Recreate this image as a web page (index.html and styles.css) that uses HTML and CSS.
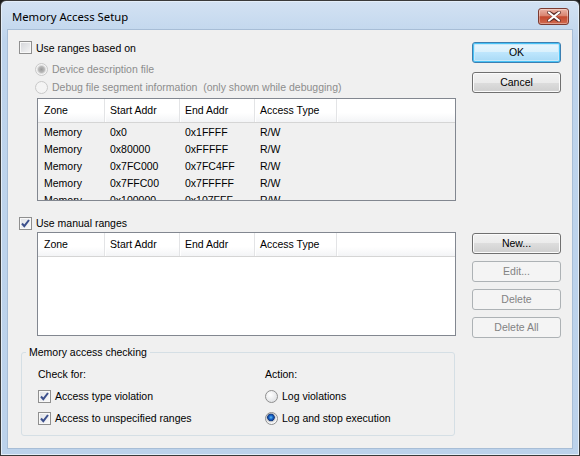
FILE: index.html
```
<!DOCTYPE html>
<html>
<head>
<title>Memory Access Setup</title>
<link rel="stylesheet" href="styles.css">
</head>
<body>
<div class="window">
  <div class="titlebar">
    <span class="title">Memory Access Setup</span>
    <span class="close"><svg width="16" height="11" viewBox="0 0 16 11"><path d="M3 1.5 L8 4.5 L13 1.5 M3 9.5 L8 6.5 L13 9.5" fill="none" stroke="#5a2a25" stroke-width="3.6" stroke-linecap="round"/><path d="M3 1.5 L13 9.5 M13 1.5 L3 9.5" fill="none" stroke="#fff" stroke-width="2.2" stroke-linecap="round"/></svg></span>
  </div>
  <div class="client">
    <div class="main">
      <div class="row"><span class="check"></span><span class="label">Use ranges based on</span></div>
      <div class="options">
        <div class="row off"><span class="radio on"></span><span class="label">Device description file</span></div>
        <div class="row off"><span class="radio"></span><span class="label">Debug file segment information&nbsp; (only shown while debugging)</span></div>
      </div>
      <div class="list grayed">
        <div class="head">
          <span>Zone</span><span>Start Addr</span><span>End Addr</span><span>Access Type</span><span></span>
        </div>
        <div class="body">
          <div class="item"><span>Memory</span><span>0x0</span><span>0x1FFFF</span><span>R/W</span></div>
          <div class="item"><span>Memory</span><span>0x80000</span><span>0xFFFFF</span><span>R/W</span></div>
          <div class="item"><span>Memory</span><span>0x7FC000</span><span>0x7FC4FF</span><span>R/W</span></div>
          <div class="item"><span>Memory</span><span>0x7FFC00</span><span>0x7FFFFF</span><span>R/W</span></div>
          <div class="item"><span>Memory</span><span>0x100000</span><span>0x107FFF</span><span>R/W</span></div>
        </div>
      </div>
      <div class="row manual"><span class="check ticked"><svg width="11" height="11" viewBox="0 0 11 11"><path d="M2 5.5 L4.3 8.2 L9 2" fill="none" stroke="#3b4f8c" stroke-width="2"/></svg></span><span class="label">Use manual ranges</span></div>
      <div class="list">
        <div class="head">
          <span>Zone</span><span>Start Addr</span><span>End Addr</span><span>Access Type</span><span></span>
        </div>
        <div class="body"></div>
      </div>
      <fieldset class="group">
        <legend>Memory access checking</legend>
        <div class="cols">
          <div class="col">
            <div class="row">Check for:</div>
            <div class="row"><span class="check ticked"><svg width="11" height="11" viewBox="0 0 11 11"><path d="M2 5.5 L4.3 8.2 L9 2" fill="none" stroke="#3b4f8c" stroke-width="2"/></svg></span><span class="label">Access type violation</span></div>
            <div class="row"><span class="check ticked"><svg width="11" height="11" viewBox="0 0 11 11"><path d="M2 5.5 L4.3 8.2 L9 2" fill="none" stroke="#3b4f8c" stroke-width="2"/></svg></span><span class="label">Access to unspecified ranges</span></div>
          </div>
          <div class="col">
            <div class="row">Action:</div>
            <div class="row"><span class="radio"></span><span class="label">Log violations</span></div>
            <div class="row"><span class="radio on"></span><span class="label">Log and stop execution</span></div>
          </div>
        </div>
      </fieldset>
    </div>
    <div class="side">
      <div class="btn default">OK</div>
      <div class="btn">Cancel</div>
      <div class="btn new">New...</div>
      <div class="btn disabled">Edit...</div>
      <div class="btn disabled">Delete</div>
      <div class="btn disabled">Delete All</div>
    </div>
  </div>
</div>
</body>
</html>
```
FILE: styles.css
```
/* Memory Access Setup dialog, Windows 7 basic look */

body
{ margin: 0;
background-color: #1c1c1c;
font-family: "Liberation Sans", Arial, sans-serif;
font-size: 10.5px;
color: #000;
}

div.window
{ width: 580px;
height: 456px;
box-sizing: border-box;
border: 1px solid #3a3a3a;
border-radius: 6px 6px 0 0;
background: linear-gradient(#d3e2f3, #bed4ec 40px, #bcd2eb);
box-shadow: inset 0 0 0 1px #e4eef9;
}

div.titlebar
{ height: 29px;
display: flex;
align-items: center;
padding-left: 11px;
padding-right: 10px;
}

span.title
{ flex: 1;
font-family: "Noto Sans", sans-serif;
font-size: 11.3px;
margin-top: 1px;
}

span.close
{ width: 29px;
height: 15px;
border: 1px solid #7b3a31;
border-radius: 3px;
display: flex;
align-items: center;
justify-content: center;
background: linear-gradient(#eab3a6, #d98470 45%, #c4492f 52%, #d06a50);
box-shadow: inset 0 0 0 1px rgba(255,255,255,0.35);
margin-top: 1px;
}

div.client
{ margin: 0 7px;
height: 418px;
background-color: #f0f0f0;
display: flex;
box-shadow: 0 0 0 1px #a7bdd6;
}

div.main
{ width: 437px;
padding: 9px 0 0 11px;
}

div.row
{ height: 18px;
display: flex;
align-items: center;
white-space: nowrap;
}

div.main > div.row:first-child
{ height: 17px;
}

span.label
{ margin-left: 4px;
}

span.check
{ width: 11px;
height: 11px;
border: 1px solid #8f8f8f;
background: linear-gradient(135deg, #d3d5d9, #f6f6f6);
box-shadow: inset 0 0 0 1px #f8f8f8;
display: flex;
}

span.check.ticked
{ background: linear-gradient(135deg, #dfe1e6, #fafafa);
}

span.radio
{ width: 11px;
height: 11px;
border: 1px solid #8f8f8f;
border-radius: 50%;
background: radial-gradient(circle at 40% 35%, #ffffff, #d7d9dc);
}

span.radio.on
{ background: radial-gradient(circle at 45% 40%, #5fc1f2 0, #1560c9 2px, #173a7a 3.5px, #b5b9c0 4px, #e8e9eb 5px, #fafafa 6px);
}

div.off
{ color: #8d8d8d;
}

div.off span.radio
{ border-color: #c9c9c9;
background: #f4f4f4;
}

div.off span.radio.on
{ background: radial-gradient(circle, #9a9a9a 0, #b9b9b9 3px, #dcdcdc 4px, #f4f4f4 5px);
}

div.options
{ margin-left: 16px;
margin-top: 4px;
}

div.list
{ margin-left: 18px;
width: 419px;
box-sizing: border-box;
border: 1px solid #828790;
background-color: #fff;
overflow: hidden;
}

div.list.grayed
{ margin-top: 2px;
height: 103px;
background-color: #f0f0f0;
}

div.head
{ display: grid;
grid-template-columns: 67px 75px 75px 82px 1fr;
height: 23px;
border-bottom: 1px solid #d5d5d5;
background: linear-gradient(#ffffff 60%, #f3f4f6);
}

div.head span
{ border-right: 1px solid #e3e4e6;
box-shadow: 1px 0 0 #fff;
padding-left: 5px;
line-height: 23px;
}

div.head span:first-child,
div.item span:first-child
{ padding-left: 6px;
}

div.head span:last-child
{ border-right: none;
}

div.body
{ padding-top: 1px;
}

div.item
{ display: grid;
grid-template-columns: 67px 75px 75px 82px;
height: 17px;
line-height: 17px;
}

div.item span
{ padding-left: 5px;
}

div.row.manual
{ margin-top: 13px;
}

div.list:not(.grayed)
{ height: 104px;
}

fieldset.group
{ margin: 9px 0 0 2px;
width: 434px;
box-sizing: border-box;
padding: 0 0 8px 0;
border: 1px solid #d5dfe5;
border-radius: 3px;
}

fieldset.group legend
{ margin-left: 4px;
padding: 0 3px;
line-height: 14px;
}

div.cols
{ display: flex;
padding-left: 16px;
margin-top: 6px;
}

div.col
{ width: 227px;
display: flex;
flex-direction: column;
gap: 4px;
}

div.col + div.col
{ width: auto;
}

div.side
{ padding: 12px 0 0 16px;
display: flex;
flex-direction: column;
}

div.btn
{ width: 87px;
height: 19px;
margin-top: 7px;
border: 1px solid #707070;
border-radius: 3px;
text-align: center;
line-height: 19px;
background: linear-gradient(#f2f2f2, #ebebeb 50%, #dddddd 50%, #cfcfcf);
box-shadow: inset 0 0 0 1px #fbfbfb;
}

div.btn.default
{ margin-top: 0;
border-color: #3c7fb1;
box-shadow: inset 0 0 0 1px #48c2f6, inset 0 0 0 2px #c8e8f9;
background: linear-gradient(#eaf6fd, #d9f0fc 50%, #bee6fd 50%, #a7d9f5);
}

div.btn.default + div.btn
{ margin-top: 9px;
}

div.btn.new
{ margin-top: 140px;
}

div.btn.disabled
{ border-color: #adb2b5;
background: #f4f4f4;
box-shadow: none;
color: #838383;
}
```
